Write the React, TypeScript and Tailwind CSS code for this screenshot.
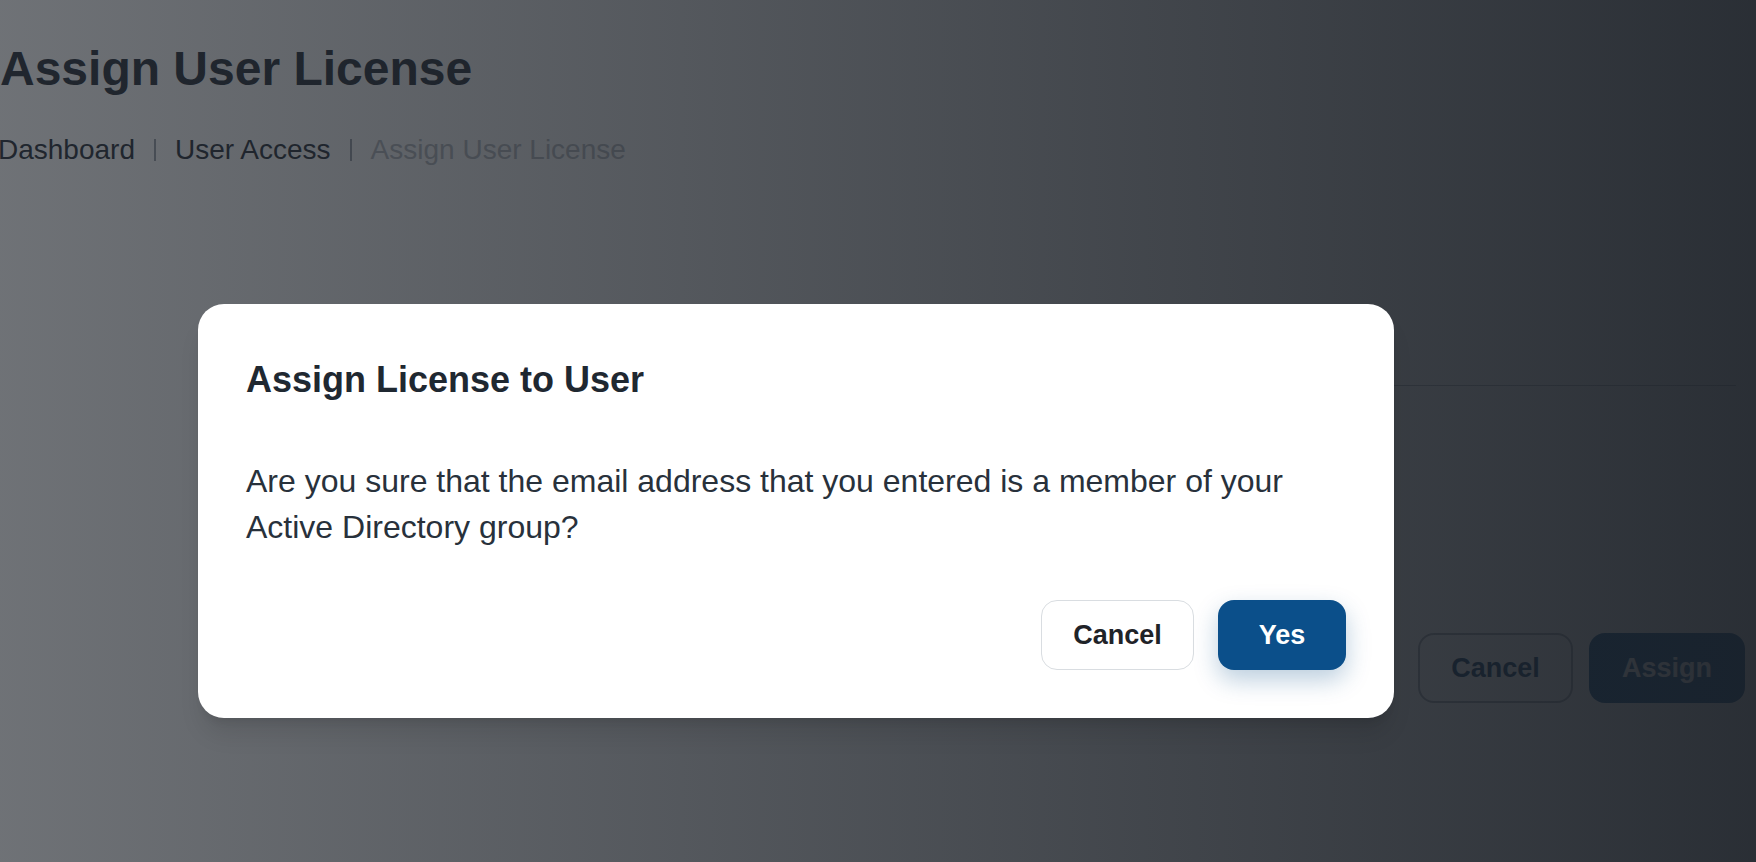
import React from 'react';

const font = { fontFamily: '"Liberation Sans", Arial, Helvetica, sans-serif' };

const Breadcrumb: React.FC = () => (
  <nav className="mt-[35px] flex items-center text-[28px] leading-[36px] -ml-[2px]">
    <span className="text-[#2b323c]">Dashboard</span>
    <span className="mx-[19px] h-[22px] w-[2px] bg-[#9ea4ad]" />
    <span className="text-[#2b323c]">User Access</span>
    <span className="mx-[19px] h-[22px] w-[2px] bg-[#9ea4ad]" />
    <span className="text-[#b8bcc2]">Assign User License</span>
  </nav>
);

const ConfirmDialog: React.FC = () => (
  <div className="absolute inset-0 flex items-start pl-[198px] pt-[304px]">
    <div className="w-[1196px] rounded-[26px] bg-white px-12 pt-[54px] pb-12 shadow-xl">
      <h2 className="text-[36px] leading-[44px] font-bold text-[#1f2831]">
        Assign License to User
      </h2>
      <p className="mt-14 text-[32px] leading-[46px] text-[#28313b]">
        Are you sure that the email address that you entered is a member of your Active Directory group?
      </p>
      <div className="mt-[50px] flex justify-end gap-6">
        <button className="h-[70px] w-[153px] rounded-2xl border border-[#d9dde1] bg-white text-[27px] font-bold text-[#1f2328]">
          Cancel
        </button>
        <button className="h-[70px] w-[128px] rounded-2xl bg-[#0b4f8a] text-[27px] font-bold text-white shadow-[0_10px_24px_rgba(11,79,138,0.28)]">
          Yes
        </button>
      </div>
    </div>
  </div>
);

export default function App() {
  return (
    <div className="relative h-[862px] w-full overflow-hidden bg-white" style={font}>
      {/* page underneath */}
      <div className="flex flex-col pt-[41px]">
        <h1 className="text-[48px] leading-[56px] font-bold text-[#2b323c]">Assign User License</h1>
        <Breadcrumb />

        <div className="mt-[217px] ml-[400px] mr-[20px] h-px bg-[#aeb3ba]" />

        <div className="mt-[247px] mr-[11px] flex justify-end gap-4">
          <button className="h-[70px] w-[155px] rounded-2xl border-2 border-[#a3a9b1] bg-white text-[27px] font-bold text-[#0b3a66]">
            Cancel
          </button>
          <button className="h-[70px] w-[156px] rounded-2xl bg-[#0b4f8a] text-[27px] font-bold text-white">
            Assign
          </button>
        </div>
      </div>

      {/* backdrop */}
      <div className="absolute inset-0 bg-linear-to-r from-[#1a1f26]/[0.63] to-[#1a1f26]/[0.93]" />

      <ConfirmDialog />
    </div>
  );
}
